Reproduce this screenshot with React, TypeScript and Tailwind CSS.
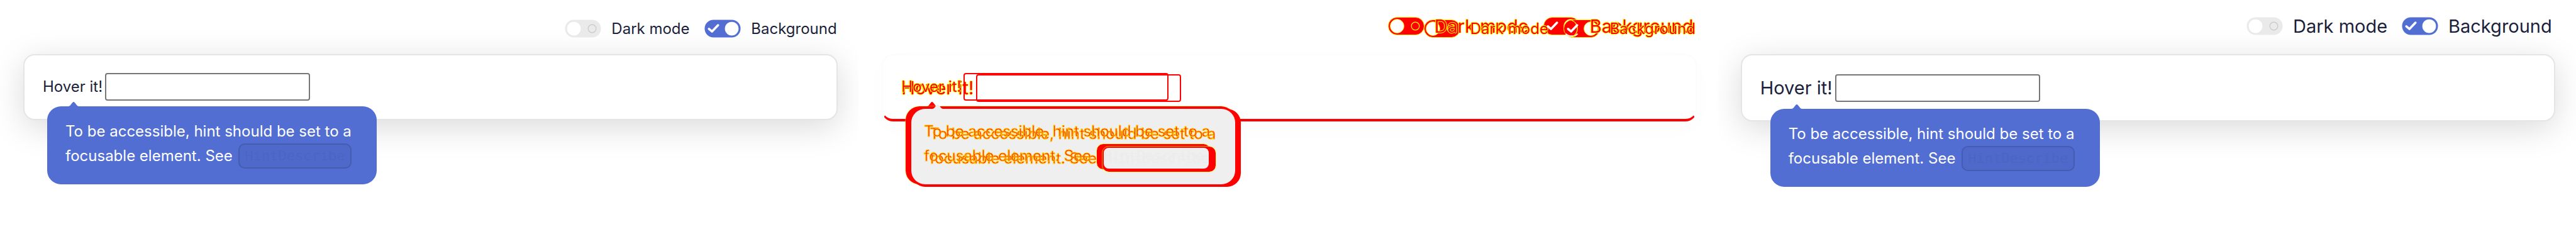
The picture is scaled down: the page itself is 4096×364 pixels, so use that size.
import { useId, type ReactNode } from "react";

type Variant = "small" | "large";

const sizes = {
  small: {
    header: "pt-[31px] text-[24px]",
    row: "pt-[28px]",
    label: "w-[99px] text-[24px]",
    popup: "left-[7px] mt-[9px]",
    darkText: "w-[120px]",
    groundText: "w-[136px]",
  },
  large: {
    header: "pt-[27px] text-[29px]",
    row: "pt-[30px]",
    label: "w-[119px] text-[29px]",
    popup: "left-[16px] mt-[11px]",
    darkText: "w-[145px]",
    groundText: "w-[168px]",
  },
};

function Toggle({ on, diff, overlap, width, children }: {
  on?: boolean;
  diff?: boolean;
  overlap?: boolean;
  width: string;
  children: ReactNode;
}) {
  const track = diff ? "#ff0000" : on ? "#526ed3" : "#eaeaea";
  const edge = diff ? "#ffff00" : "none";
  return (
    <label className="flex h-[29px] items-center gap-4">
      <input type="checkbox" role="switch" defaultChecked={on} className="sr-only" />
      <svg viewBox="0 0 64 32" className="h-[29px] w-[58px] shrink-0" aria-hidden="true">
        <rect x="0.5" y="0.5" width="63" height="31" rx="15.5" fill={track} stroke={edge} />
        {overlap && (
          <>
            <path d="M4 25a14 14 0 0 0 21 0a16 16 0 0 1-21 0z" fill="#efefef" stroke="#efefef" strokeWidth="2" />
            <path d="M14 1a16 16 0 0 1 0 30" fill="none" stroke="#ffff00" strokeWidth="1.5" />
          </>
        )}
        <circle cx={on ? 48 : 16} cy="16" r="12" fill="#fff" stroke={edge} />
        {on ? (
          <path d="M8 16.5l5.5 4.5L24 10" fill="none" stroke="#fff" strokeWidth="4" strokeLinecap="round" strokeLinejoin="round" />
        ) : (
          <circle cx="48" cy="16" r="7" fill="none" stroke={diff ? "#ffff00" : "#c8c8c8"} strokeWidth="1.3" />
        )}
      </svg>
      <span className={`z-10 whitespace-nowrap ${width}`}>{children}</span>
    </label>
  );
}

function Arrow({ color }: { color: string }) {
  return (
    <svg viewBox="0 0 20 8" className="h-[7px] w-[18px]" aria-hidden="true">
      <path d="M0 8c3 0 4-2 5-3.200L8 1.200Q10-1 12 1.200L15 4.800C16 6 17 8 20 8z" fill={color} />
    </svg>
  );
}

function Panel({ variant, diff }: { variant: Variant; diff?: boolean }) {
  const id = useId();
  const s = sizes[variant];
  const ink = diff
    ? "text-[#ff0000] [text-shadow:1px_0_#ffff00,-1px_0_#ffff00,0_1px_#ffff00,0_-1px_#ffff00]"
    : "text-[#1b1f3b]";
  return (
    <section className={`col-start-1 row-start-1 min-w-0 pr-[33px] pl-[37px] ${ink}`}>
      <div className={`flex h-[86px] items-start justify-end gap-[28px] pr-[2px] leading-[29px] ${s.header}`}>
        <Toggle diff={diff} width={s.darkText}>Dark mode</Toggle>
        <Toggle on diff={diff} overlap={diff && variant === "small"} width={s.groundText}>Background</Toggle>
      </div>
      <div
        className={`rounded-[18px] border-2 px-[29px] pb-[29px] ${s.row} ${
          diff ? "border-transparent" : "border-[#e5e5e5] bg-white shadow-[0_11px_52px_rgba(0,0,0,0.15)]"
        }`}
      >
        <div className="relative flex h-[44px] items-center">
          <label htmlFor={id} className={`whitespace-nowrap ${s.label}`}>Hover it!</label>
          <input
            id={id}
            type="text"
            className={`h-[44px] w-[326px] rounded-[4px] border-2 px-2 ${diff ? "border-[#ff0000]" : "border-[#767676]"}`}
          />
          <div
            role="tooltip"
            className={`absolute top-full h-[124px] w-[524px] rounded-[22px] px-[29px] pt-[21px] text-[24px] leading-[38px] font-[370] whitespace-nowrap ${s.popup} ${
              diff ? "[text-shadow:none] [-webkit-text-stroke:1px_#ffcc00]" : "bg-[#526ed3] text-white"
            }`}
          >
            {!diff && (
              <span className="absolute bottom-full left-[33px] flex">
                <Arrow color="#526ed3" />
              </span>
            )}
            <p>To be accessible, hint should be set to a</p>
            <p className="flex items-center">
              <span className="w-[275px]">focusable element. See</span>
              <code
                className={`flex h-[40px] w-[180px] items-center justify-center rounded-[10px] border-2 font-['DejaVu_Sans_Mono',monospace] text-[22px] ${
                  diff
                    ? "border-transparent text-[#ececec] [-webkit-text-stroke:0]"
                    : "border-[#455cb3] bg-[#4e69c9] text-[#4b65c3]"
                }`}
              >
                HintDescribe
              </code>
            </p>
          </div>
        </div>
      </div>
    </section>
  );
}

function DiffShapes() {
  return (
    <div className="relative col-start-1 row-start-1 min-w-0 pt-[86px] pr-[33px] pl-[37px]" aria-hidden="true">
      <div className="h-[107px] rounded-[18px] border-2 border-b-4 border-[#fcfcfc] border-b-[#ff0000] bg-white shadow-[0_11px_44px_rgba(0,0,0,0.015)]" />
      <span className="absolute top-[162px] left-[108px] flex"><Arrow color="#ff0000" /></span>
      <div className="absolute top-[169px] left-[75px] h-[124px] w-[524px] rounded-[22px] bg-[#ff0000] outline outline-[#ffff00]/40" />
      <div className="absolute top-[173px] left-[84px] h-[124px] w-[524px] rounded-[22px] bg-[#ff0000]" />
      <span className="absolute top-[166px] left-[117px] flex"><Arrow color="#efefef" /></span>
      <div className="absolute top-[173px] left-[84px] h-[120px] w-[515px] rounded-[22px] bg-[#efefef]" />
      <div className="absolute top-[229px] left-[379px] h-[40px] w-[180px] rounded-[10px] bg-[#ff0000] outline outline-[#ffff00]/60" />
      <div className="absolute top-[233px] left-[388px] h-[40px] w-[180px] rounded-[10px] bg-[#ff0000] outline outline-[#ffff00]/60" />
      <div className="absolute top-[235px] left-[390px] h-[33px] w-[167px] rounded-[8px] bg-[#efefef]" />
    </div>
  );
}

export default function App() {
  return (
    <main className="grid min-h-screen grid-cols-3 bg-white font-['Inter',sans-serif]">
      <div className="grid overflow-hidden"><Panel variant="small" /></div>
      <div className="grid overflow-hidden">
        <DiffShapes />
        <Panel variant="large" diff />
        <Panel variant="small" diff />
      </div>
      <div className="grid overflow-hidden"><Panel variant="large" /></div>
    </main>
  );
}
